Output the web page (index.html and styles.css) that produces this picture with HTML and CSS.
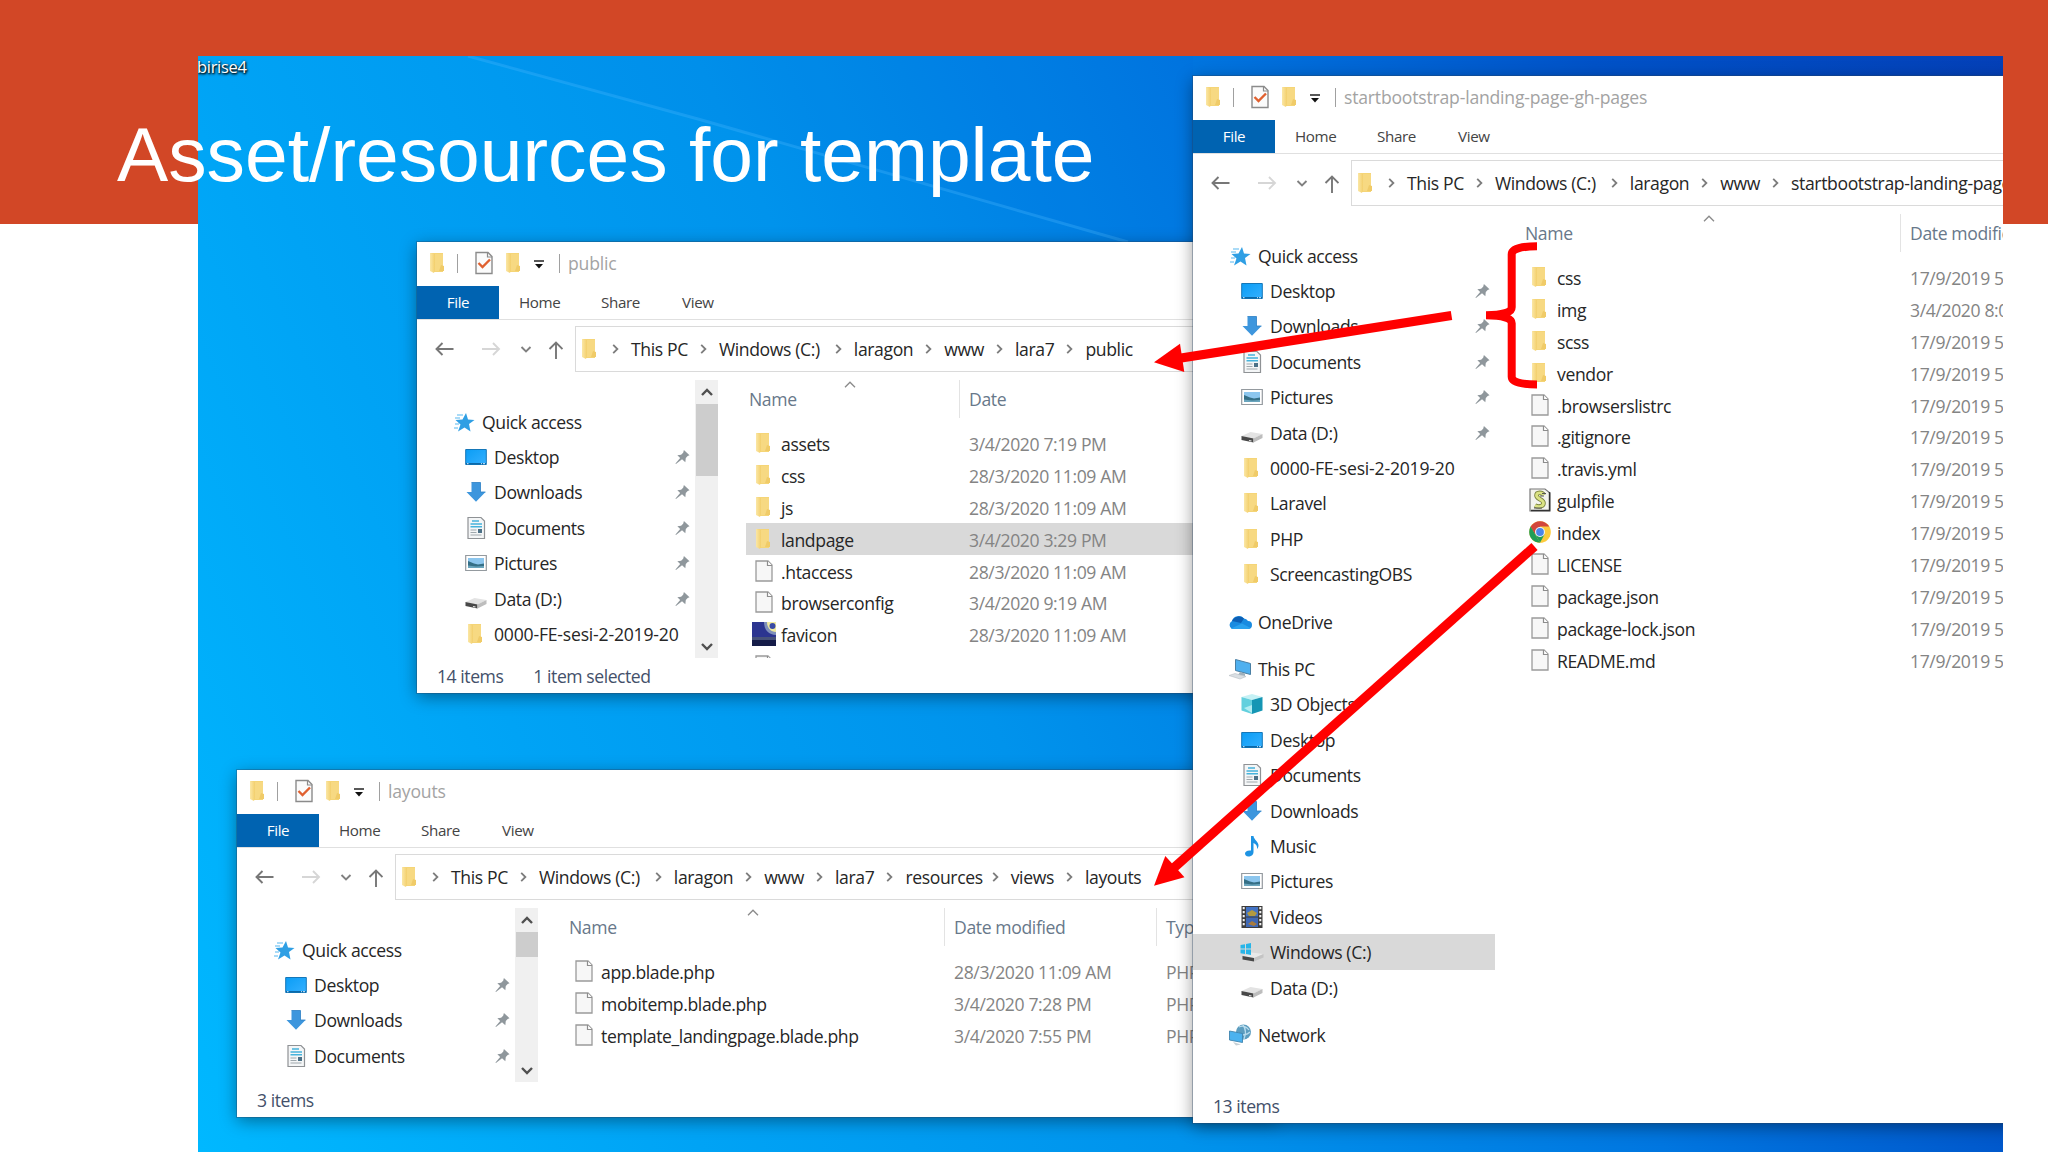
FILE: index.html
```html
<!DOCTYPE html>
<html lang="en">

<head>
  <meta charset="UTF-8">
  <meta name="viewport" content="width=device-width, initial-scale=1.0">
  <title>Asset/resources for template</title>
  <link rel="stylesheet" href="styles.css">
</head>

<body>
  <!-- icon sprite -->
  <svg class="sprite">
    <defs>
      <linearGradient id="gFolder"><stop offset="0" stop-color="#fbe7a6"/><stop offset="1" stop-color="#f3cf6c"/></linearGradient>
      <linearGradient id="gScreen" x1="0" y1="0" x2="1" y2="1"><stop offset="0" stop-color="#0a9df5"/><stop offset="1" stop-color="#35b0ff"/></linearGradient>
    </defs>
    <symbol id="folder" viewBox="0 0 24 24">
      <path d="M4 2h13v19H7z" fill="#f5d577"/>
      <path d="M4 2l5 1v16l-1 3-4-2z" fill="url(#gFolder)"/>
      <path d="M9 3h8v12l1 1v4H9z" fill="#f7d982"/>
      <path d="M15 14l3 1v5h-5z" fill="#f0cb68"/>
    </symbol>
    <symbol id="doc" viewBox="0 0 24 24">
      <path d="M4 2h12l4 4v16H4z" fill="#f7f7f7" stroke="#9a9a9a" stroke-width="1.3"/>
      <path d="M15.5 2v4.500H20" fill="#fff" stroke="#8d8d8d" stroke-width="1.2"/>
    </symbol>
    <symbol id="check" viewBox="0 0 24 24">
      <path d="M4 1.500h12l4 4v17H4z" fill="#fbfbfb" stroke="#8b8b8b" stroke-width="1.4"/>
      <path d="M15.500 1.500v4.500H20" fill="none" stroke="#8b8b8b" stroke-width="1.200"/>
      <path d="M6.500 12l4 4L18 8.500" fill="none" stroke="#e0602f" stroke-width="2.400"/>
    </symbol>
    <symbol id="star" viewBox="0 0 24 24">
      <path d="M14 3l2 6.500 6.500.5-5.500 4 1.500 7.500-6-4-6.500 4 2.500-7L3.500 10l7-.5z" fill="#2f9fe4"/>
      <path d="M5 5h6M3 8h5M3 14h4M2 18h4" stroke="#8fd0f5" stroke-width="1.300"/>
    </symbol>
    <symbol id="desktop" viewBox="0 0 24 24">
      <path d="M1.700 4.500h20.600v15H1.700z" fill="url(#gScreen)" stroke="#1577b8" stroke-width="1"/>
      <path d="M2 18.700h20" stroke="#0b68a8" stroke-width="1.400"/>
      <path d="M3 18.700h1.500M17 18.700h1M19 18.700h2" stroke="#d8f0ff" stroke-width="1"/>
    </symbol>
    <symbol id="down" viewBox="0 0 24 24">
      <path d="M7.500 2.500h9V12H21.500L12 21.800 2.500 12h5z" fill="#3d96dd"/>
      <path d="M7.500 2.500h9V12H21.500" fill="none" stroke="#2b7fc4" stroke-width=".8"/>
    </symbol>
    <symbol id="docs" viewBox="0 0 24 24">
      <path d="M4 1.500h13l3.500 3.500v17.500H4z" fill="#f4f6f7" stroke="#8f9295" stroke-width="1.200"/>
      <path d="M8 5h7M6.500 8h11.500M6.500 10.800h11.500" stroke="#46b3dc" stroke-width="1.500"/>
      <path d="M6.500 14h6M6.500 16.500h6M6.500 19h11" stroke="#9fa8ad" stroke-width="1.200"/>
      <path d="M14 13h4v4h-4z" fill="#4c7187"/>
    </symbol>
    <symbol id="pictures" viewBox="0 0 24 24">
      <path d="M1.700 4.500h20.600v15H1.700z" fill="#fff" stroke="#949a9f" stroke-width="1.200"/>
      <path d="M4 7h16v10H4z" fill="#8cc6ee"/>
      <path d="M4 10l6 2.500 4 1 6-1V17H4z" fill="#356f86"/>
      <path d="M4 14.500l8 1 8-.5v2H4z" fill="#6aa5bd"/>
    </symbol>
    <symbol id="drive" viewBox="0 0 24 24">
      <path d="M1.500 15l9-4 12 2-9.500 5z" fill="#e3e3e3"/>
      <path d="M1.500 15l12 2.500v4L1.500 19z" fill="#484848"/>
      <path d="M13.500 17.500l9-4.500v4l-9 4.500z" fill="#bdbdbd"/>
      <path d="M9 19.500l2.500.5" stroke="#e9e9e9" stroke-width="1.200"/>
    </symbol>
    <symbol id="cdrive" viewBox="0 0 24 24">
      <path d="M2.500 16l9-3.500 12 1.500-9.500 4.500z" fill="#e9e9e9"/>
      <path d="M2.500 16l11.500 2v3.500L2.500 19.500z" fill="#484848"/>
      <path d="M14 18l9.500-4v3.500L14 21.500z" fill="#c4c4c4"/>
      <path d="M.5 5l4.500-.8V8.500H.5zM6 4l5-.9v5.400H6zM.5 9.500H5V14l-4.500-.8zM6 9.500h5v5.400l-5-.9z" fill="#28b5e8"/>
    </symbol>
    <symbol id="cloud" viewBox="0 0 24 24">
      <path d="M4 19a4.500 4.500 0 0 1 0-8 7 7 0 0 1 12-2.500A6 6 0 0 1 20 11a4 4 0 0 1 0 8z" fill="#1a8be0"/>
      <path d="M4 11A7.500 7.500 0 0 1 16 8.500l-3 4.500z" fill="#0c5fb5"/>
      <path d="M3 18.500l11-5 8.500 4.500a4 4 0 0 1-2.500 1H4z" fill="#2ba2ee"/>
    </symbol>
    <symbol id="pc" viewBox="0 0 24 24">
      <path d="M7.500 2.500l15 4v11l-15-4z" fill="#4fb0ef" stroke="#4a7fa3" stroke-width="1"/>
      <path d="M12 15l5 1.500v2.500l-7-1z" fill="#9fb0bb"/>
      <path d="M1 18.500l6-2 11 3-6 2.500z" fill="#dadfe3" stroke="#b7bec4" stroke-width=".6"/>
    </symbol>
    <symbol id="cube" viewBox="0 0 24 24">
      <path d="M1.500 5L12 2l10.500 3L12 8z" fill="#c5f1f5"/>
      <path d="M1.500 5L12 8v14L1.500 18.500z" fill="#63d0de"/>
      <path d="M22.500 5L12 8v14l10.500-3.500z" fill="#1596b4"/>
      <path d="M4 16l8-3v8z" fill="#b2edf2"/>
    </symbol>
    <symbol id="music" viewBox="0 0 24 24">
      <path d="M11 2h2.500c.5 4 5 5.500 5 9.500 0 2-1 3-1.500 3.500.5-3-1-5-3.500-6v9c0 3-2.500 4.500-5 4.500S5 21 5 19.500 7 16 11 16.500z" fill="#1d93e3"/>
    </symbol>
    <symbol id="videos" viewBox="0 0 24 24">
      <path d="M1.500 1h21v22h-21z" fill="#3c3c3c"/>
      <path d="M6 2h12v9.500H6z" fill="#4373c4"/>
      <path d="M6 12.500h12V22H6z" fill="#3f68b5"/>
      <path d="M7 8l5-3 5 3-2 3H9z" fill="#b29a3f"/>
      <path d="M8 19l4-3 5 3-3 2z" fill="#a97b3c"/>
      <path d="M3.700 2v20M20.300 2v20" stroke="#f2f2f2" stroke-width="2" stroke-dasharray="2.200 1.800"/>
    </symbol>
    <symbol id="network" viewBox="0 0 24 24">
      <circle cx="15.500" cy="9" r="7.500" fill="#5c9dbf"/>
      <path d="M11 4c4-2 8 0 10 3M10 10c4 3 9 2 12-1M15 2c3 4 3 9 1 14" fill="none" stroke="#b9dced" stroke-width="1.300"/>
      <path d="M1.500 8l13 2.500v9L1.500 17z" fill="#4bb2ef" stroke="#3f84ae" stroke-width=".9"/>
      <path d="M5 19l8 2.500-5 1z" fill="#c7d0d5"/>
    </symbol>
    <symbol id="script" viewBox="0 0 24 24">
      <path d="M2 1h15l5 4v18H2z" fill="#f3f3ee" stroke="#777" stroke-width="1.200"/>
      <path d="M21.500 4v18.500H3" fill="none" stroke="#333" stroke-width="1.400"/>
      <path d="M15.500 7c-1-3-7-3-7 .5s7 4 7 7.500-5 4.500-8.500 2.500" fill="none" stroke="#7c8440" stroke-width="4.600"/>
      <path d="M15.500 7c-1-3-7-3-7 .5s7 4 7 7.500-5 4.500-8.500 2.500" fill="none" stroke="#dbe384" stroke-width="2.800"/>
      <path d="M14 5.500h4M12 8h4M6 20h8" stroke="#555" stroke-width="1.100"/>
    </symbol>
    <symbol id="chrome" viewBox="0 0 24 24">
      <circle cx="12" cy="12" r="10.800" fill="#fccb3c"/>
      <path d="M2.650 6.600L12 22.800A10.800 10.800 0 0 1 2.650 6.600z" fill="#1f9d57"/>
      <path d="M2.650 6.600L7.500 15l4.500 7.800 4.500-8.300z" fill="#1f9d57"/>
      <path d="M2.650 6.600A10.800 10.800 0 0 1 21.350 6.600H12l-4.500 7.900z" fill="#d2463c"/>
      <circle cx="12" cy="12" r="5" fill="#f3f3f3"/>
      <circle cx="12" cy="12" r="3.900" fill="#4a86ea"/>
    </symbol>
    <symbol id="night" viewBox="0 0 24 24">
      <path d="M0 0h24v24H0z" fill="#2c3590"/>
      <path d="M0 16h24v8H0z" fill="#151c48"/>
      <path d="M0 15h24v3H0z" fill="#47527a"/>
      <path d="M12 0h12v13c-7 0-12-5-12-13z" fill="#7f90bb"/>
      <path d="M15 0h9v10c-5 0-9-4-9-10z" fill="#f0eaa0"/>
      <circle cx="20.500" cy="4" r="3" fill="#3a4ba5"/>
    </symbol>
    <symbol id="pin" viewBox="0 0 16 16">
      <path d="M9.500.5l6 5.500-2 .8-2 2.200-.5 4.500-3.500-3L1 15.500l-.5-.5 5-6L2.500 6l4-.5 2.200-2z" fill="#8f979c"/>
    </symbol>
    <symbol id="chev" viewBox="0 0 7 10">
      <path d="M1.200.8L5.400 5 1.200 9.200" fill="none" stroke="#7c7c7c" stroke-width="1.800"/>
    </symbol>
    <symbol id="sort" viewBox="0 0 12 7">
      <path d="M1 6.300L6 1.200l5 5.100" fill="none" stroke="#8a8a8a" stroke-width="1.300"/>
    </symbol>
    <symbol id="scrollup" viewBox="0 0 12 8">
      <path d="M1 7l5-5 5 5" fill="none" stroke="#505050" stroke-width="2.400"/>
    </symbol>
    <symbol id="scrolldown" viewBox="0 0 12 8">
      <path d="M1 1l5 5 5-5" fill="none" stroke="#505050" stroke-width="2.400"/>
    </symbol>
    <symbol id="more" viewBox="0 0 10 9">
      <path d="M0 1h10" stroke="#222" stroke-width="1.500"/>
      <path d="M1 4h8L5 8.500z" fill="#111"/>
    </symbol>
    <!-- back, forward, recent and up -->
    <symbol id="arrows" viewBox="0 0 130 20">
      <path d="M20.500 10H3.500M9.500 4l-6 6 6 6" fill="none" stroke="#777" stroke-width="1.900"/>
      <path d="M49 10h17M60 4l6 6-6 6" fill="none" stroke="#d6d6d6" stroke-width="1.900"/>
      <path d="M88.500 8l4.500 4.500L97.500 8" fill="none" stroke="#808080" stroke-width="1.900"/>
      <path d="M123 20V4M116.500 10l6.500-6.500 6.500 6.500" fill="none" stroke="#777" stroke-width="1.900"/>
    </symbol>
  </svg>

  <div class="slide">
    <div class="band"></div>

    <div class="screen">
      <svg class="rays" viewBox="0 0 1805 1096">
        <path d="M270 0L500 63l430 123 65 20V0z" fill="#0060d8" opacity=".08"/>
        <path d="M270 0L500 63l430 123" fill="none" stroke="#4cb8ff" stroke-width="3" opacity=".3"/>
      </svg>
      <div class="shortcut">birise4</div>

      <!-- lara7/public -->
      <div class="window win-public">
        <div class="titlebar">
          <svg class="icon"><use href="#folder"/></svg>
          <i class="sep"></i>
          <svg class="icon check"><use href="#check"/></svg>
          <svg class="icon"><use href="#folder"/></svg>
          <svg class="more"><use href="#more"/></svg>
          <i class="sep"></i>
          <span class="caption">public</span>
        </div>
        <div class="tabs"><b>File</b><span class="home">Home</span><span class="share">Share</span><span>View</span></div>
        <div class="navbar">
          <svg class="arrows"><use href="#arrows"/></svg>
          <div class="address">
            <svg class="icon"><use href="#folder"/></svg>
            <svg class="chev"><use href="#chev"/></svg><span>This PC</span>
            <svg class="chev"><use href="#chev"/></svg><span class="disk">Windows (C:)</span>
            <svg class="chev"><use href="#chev"/></svg><span>laragon</span>
            <svg class="chev"><use href="#chev"/></svg><span>www</span>
            <svg class="chev"><use href="#chev"/></svg><span>lara7</span>
            <svg class="chev"><use href="#chev"/></svg><span>public</span>
          </div>
        </div>
        <div class="content">
          <ul class="tree">
            <li class="root"><svg class="icon"><use href="#star"/></svg>Quick access</li>
            <li><svg class="icon"><use href="#desktop"/></svg>Desktop<svg class="pin"><use href="#pin"/></svg></li>
            <li><svg class="icon"><use href="#down"/></svg>Downloads<svg class="pin"><use href="#pin"/></svg></li>
            <li><svg class="icon"><use href="#docs"/></svg>Documents<svg class="pin"><use href="#pin"/></svg></li>
            <li><svg class="icon"><use href="#pictures"/></svg>Pictures<svg class="pin"><use href="#pin"/></svg></li>
            <li><svg class="icon"><use href="#drive"/></svg>Data (D:)<svg class="pin"><use href="#pin"/></svg></li>
            <li class="digits"><svg class="icon"><use href="#folder"/></svg>0000-FE-sesi-2-2019-20</li>
          </ul>
          <div class="scrollbar">
            <svg><use href="#scrollup"/></svg>
            <div class="thumb"></div>
            <svg class="last"><use href="#scrolldown"/></svg>
          </div>
          <div class="files">
            <svg class="sort"><use href="#sort"/></svg>
            <div class="row head"><span class="name">Name</span><span class="date">Date</span></div>
            <div class="row"><svg class="icon"><use href="#folder"/></svg><span class="name">assets</span><span class="date">3/4/2020 7:19 PM</span></div>
            <div class="row"><svg class="icon"><use href="#folder"/></svg><span class="name">css</span><span class="date">28/3/2020 11:09 AM</span></div>
            <div class="row"><svg class="icon"><use href="#folder"/></svg><span class="name">js</span><span class="date">28/3/2020 11:09 AM</span></div>
            <div class="row selected"><svg class="icon"><use href="#folder"/></svg><span class="name">landpage</span><span class="date">3/4/2020 3:29 PM</span></div>
            <div class="row"><svg class="icon"><use href="#doc"/></svg><span class="name">.htaccess</span><span class="date">28/3/2020 11:09 AM</span></div>
            <div class="row"><svg class="icon"><use href="#doc"/></svg><span class="name">browserconfig</span><span class="date">3/4/2020 9:19 AM</span></div>
            <div class="row"><svg class="icon"><use href="#night"/></svg><span class="name">favicon</span><span class="date">28/3/2020 11:09 AM</span></div>
            <div class="row"><svg class="icon"><use href="#doc"/></svg></div>
          </div>
        </div>
        <div class="status"><span>14 items</span><span class="picked">1 item selected</span></div>
      </div>

      <!-- resources/views/layouts -->
      <div class="window win-layouts">
        <div class="titlebar">
          <svg class="icon"><use href="#folder"/></svg>
          <i class="sep"></i>
          <svg class="icon check"><use href="#check"/></svg>
          <svg class="icon"><use href="#folder"/></svg>
          <svg class="more"><use href="#more"/></svg>
          <i class="sep"></i>
          <span class="caption">layouts</span>
        </div>
        <div class="tabs"><b>File</b><span class="home">Home</span><span class="share">Share</span><span>View</span></div>
        <div class="navbar">
          <svg class="arrows"><use href="#arrows"/></svg>
          <div class="address">
            <svg class="icon"><use href="#folder"/></svg>
            <svg class="chev"><use href="#chev"/></svg><span>This PC</span>
            <svg class="chev"><use href="#chev"/></svg><span class="disk">Windows (C:)</span>
            <svg class="chev"><use href="#chev"/></svg><span>laragon</span>
            <svg class="chev"><use href="#chev"/></svg><span>www</span>
            <svg class="chev"><use href="#chev"/></svg><span>lara7</span>
            <svg class="chev"><use href="#chev"/></svg><span class="res">resources</span>
            <svg class="chev"><use href="#chev"/></svg><span>views</span>
            <svg class="chev"><use href="#chev"/></svg><span>layouts</span>
          </div>
        </div>
        <div class="content">
          <ul class="tree">
            <li class="root"><svg class="icon"><use href="#star"/></svg>Quick access</li>
            <li><svg class="icon"><use href="#desktop"/></svg>Desktop<svg class="pin"><use href="#pin"/></svg></li>
            <li><svg class="icon"><use href="#down"/></svg>Downloads<svg class="pin"><use href="#pin"/></svg></li>
            <li><svg class="icon"><use href="#docs"/></svg>Documents<svg class="pin"><use href="#pin"/></svg></li>
          </ul>
          <div class="scrollbar">
            <svg><use href="#scrollup"/></svg>
            <div class="thumb"></div>
            <svg class="last"><use href="#scrolldown"/></svg>
          </div>
          <div class="files">
            <svg class="sort"><use href="#sort"/></svg>
            <div class="row head"><span class="name">Name</span><span class="date">Date modified</span><span class="type">Type</span></div>
            <div class="row"><svg class="icon"><use href="#doc"/></svg><span class="name">app.blade.php</span><span class="date">28/3/2020 11:09 AM</span><span class="type">PHP</span></div>
            <div class="row"><svg class="icon"><use href="#doc"/></svg><span class="name">mobitemp.blade.php</span><span class="date">3/4/2020 7:28 PM</span><span class="type">PHP</span></div>
            <div class="row"><svg class="icon"><use href="#doc"/></svg><span class="name">template_landingpage.blade.php</span><span class="date">3/4/2020 7:55 PM</span><span class="type">PHP</span></div>
          </div>
        </div>
        <div class="status"><span>3 items</span></div>
      </div>

      <!-- startbootstrap source folder -->
      <div class="window win-source">
        <div class="titlebar">
          <svg class="icon"><use href="#folder"/></svg>
          <i class="sep"></i>
          <svg class="icon check"><use href="#check"/></svg>
          <svg class="icon"><use href="#folder"/></svg>
          <svg class="more"><use href="#more"/></svg>
          <i class="sep"></i>
          <span class="caption">startbootstrap-landing-page-gh-pages</span>
        </div>
        <div class="tabs"><b>File</b><span class="home">Home</span><span class="share">Share</span><span>View</span></div>
        <div class="navbar">
          <svg class="arrows"><use href="#arrows"/></svg>
          <div class="address">
            <svg class="icon"><use href="#folder"/></svg>
            <svg class="chev"><use href="#chev"/></svg><span>This PC</span>
            <svg class="chev"><use href="#chev"/></svg><span class="disk">Windows (C:)</span>
            <svg class="chev"><use href="#chev"/></svg><span>laragon</span>
            <svg class="chev"><use href="#chev"/></svg><span>www</span>
            <svg class="chev"><use href="#chev"/></svg><span>startbootstrap-landing-page</span>
          </div>
        </div>
        <div class="content">
          <ul class="tree">
            <li class="root"><svg class="icon"><use href="#star"/></svg>Quick access</li>
            <li><svg class="icon"><use href="#desktop"/></svg>Desktop<svg class="pin"><use href="#pin"/></svg></li>
            <li><svg class="icon"><use href="#down"/></svg>Downloads<svg class="pin"><use href="#pin"/></svg></li>
            <li><svg class="icon"><use href="#docs"/></svg>Documents<svg class="pin"><use href="#pin"/></svg></li>
            <li><svg class="icon"><use href="#pictures"/></svg>Pictures<svg class="pin"><use href="#pin"/></svg></li>
            <li><svg class="icon"><use href="#drive"/></svg>Data (D:)<svg class="pin"><use href="#pin"/></svg></li>
            <li class="digits"><svg class="icon"><use href="#folder"/></svg>0000-FE-sesi-2-2019-20</li>
            <li><svg class="icon"><use href="#folder"/></svg>Laravel</li>
            <li><svg class="icon"><use href="#folder"/></svg>PHP</li>
            <li><svg class="icon"><use href="#folder"/></svg>ScreencastingOBS</li>
            <li class="root"><svg class="icon"><use href="#cloud"/></svg>OneDrive</li>
            <li class="root"><svg class="icon"><use href="#pc"/></svg>This PC</li>
            <li><svg class="icon"><use href="#cube"/></svg>3D Objects</li>
            <li><svg class="icon"><use href="#desktop"/></svg>Desktop</li>
            <li><svg class="icon"><use href="#docs"/></svg>Documents</li>
            <li><svg class="icon"><use href="#down"/></svg>Downloads</li>
            <li><svg class="icon"><use href="#music"/></svg>Music</li>
            <li><svg class="icon"><use href="#pictures"/></svg>Pictures</li>
            <li><svg class="icon"><use href="#videos"/></svg>Videos</li>
            <li class="selected"><svg class="icon"><use href="#cdrive"/></svg>Windows (C:)</li>
            <li><svg class="icon"><use href="#drive"/></svg>Data (D:)</li>
            <li class="root"><svg class="icon"><use href="#network"/></svg>Network</li>
          </ul>
          <div class="files">
            <svg class="sort"><use href="#sort"/></svg>
            <div class="row head"><span class="name">Name</span><span class="date">Date modified</span></div>
            <div class="row"><svg class="icon"><use href="#folder"/></svg><span class="name">css</span><span class="date">17/9/2019 5</span></div>
            <div class="row"><svg class="icon"><use href="#folder"/></svg><span class="name">img</span><span class="date">3/4/2020 8:0</span></div>
            <div class="row"><svg class="icon"><use href="#folder"/></svg><span class="name">scss</span><span class="date">17/9/2019 5</span></div>
            <div class="row"><svg class="icon"><use href="#folder"/></svg><span class="name">vendor</span><span class="date">17/9/2019 5</span></div>
            <div class="row"><svg class="icon"><use href="#doc"/></svg><span class="name">.browserslistrc</span><span class="date">17/9/2019 5</span></div>
            <div class="row"><svg class="icon"><use href="#doc"/></svg><span class="name">.gitignore</span><span class="date">17/9/2019 5</span></div>
            <div class="row"><svg class="icon"><use href="#doc"/></svg><span class="name">.travis.yml</span><span class="date">17/9/2019 5</span></div>
            <div class="row"><svg class="icon"><use href="#script"/></svg><span class="name">gulpfile</span><span class="date">17/9/2019 5</span></div>
            <div class="row"><svg class="icon"><use href="#chrome"/></svg><span class="name">index</span><span class="date">17/9/2019 5</span></div>
            <div class="row"><svg class="icon"><use href="#doc"/></svg><span class="name">LICENSE</span><span class="date">17/9/2019 5</span></div>
            <div class="row"><svg class="icon"><use href="#doc"/></svg><span class="name">package.json</span><span class="date">17/9/2019 5</span></div>
            <div class="row"><svg class="icon"><use href="#doc"/></svg><span class="name">package-lock.json</span><span class="date">17/9/2019 5</span></div>
            <div class="row"><svg class="icon"><use href="#doc"/></svg><span class="name">README.md</span><span class="date">17/9/2019 5</span></div>
          </div>
        </div>
        <div class="status"><span>13 items</span></div>
      </div>
    </div>

    <h1>Asset/resources for template</h1>

    <!-- red arrows and bracket over the windows -->
    <svg class="marks" viewBox="0 0 2048 1152">
      <path d="M1451.500 315.500L1178 358.500" stroke="#f00" stroke-width="9.300"/>
      <path d="M1154 362.300l26-18.600 4.300 28.300z" fill="#f00"/>
      <path d="M1534.500 546.500L1172 869.500" stroke="#f00" stroke-width="9.300"/>
      <path d="M1154 885.700l11.300-29.700 19.200 21.300z" fill="#f00"/>
      <path d="M1537 246.300c-17 0-25.300 3-25.300 8v53c0 5-9 8-25.700 8 16.700 0 25.700 3 25.700 8v53.500c0 5 8.300 7.700 25.300 7.700" fill="none" stroke="#f00" stroke-width="8"/>
    </svg>
  </div>
</body>

</html>
```
FILE: styles.css
```css
* {
  margin: 0;
  padding: 0;
  box-sizing: border-box;
}

body {
  background-color: #fff;
  font-family: "Open Sans", "Noto Sans", sans-serif;
}

.sprite {
  position: absolute;
  width: 0;
  height: 0;
}

.slide {
  position: relative;
  width: 2048px;
  height: 1152px;
  overflow: hidden;
}

.band {
  height: 224px;
  background-color: #d24726;
}

h1 {
  position: absolute;
  left: 117px;
  top: 110px;
  font: 76.8px/88px "Liberation Sans", Arial, sans-serif;
  color: #fff;
  white-space: nowrap;
}

.marks {
  position: absolute;
  left: 0;
  top: 0;
  width: 2048px;
  height: 1152px;
}

/* desktop */
.screen {
  position: absolute;
  left: 198px;
  top: 56px;
  width: 1805px;
  height: 1096px;
  overflow: hidden;
  background: linear-gradient(66deg, #00b8ff 0%, #00a3f5 22%, #0093ec 43%, #0076e0 64%, #0052c8 82%, #0440b8 100%);
}

.rays {
  display: block;
  width: 1805px;
  height: 1096px;
}

.shortcut {
  position: absolute;
  left: -1px;
  top: 0;
  font-size: 16.5px;
  line-height: 22px;
  letter-spacing: -0.3px;
  color: #fff;
  text-shadow: 1px 1px 2px #000, 0 1px 3px #000;
}

/* explorer window */
.window {
  position: absolute;
  display: flex;
  flex-direction: column;
  background-color: #fff;
  box-shadow: 0 0 0 1px rgba(40, 70, 100, 0.35), 0 4px 16px rgba(0, 0, 0, 0.4);
  font-size: 17.6px;
  letter-spacing: -0.38px;
  white-space: nowrap;
  color: #262626;
}

.win-public {
  left: 219px;
  top: 186px;
  width: 860px;
  height: 451px;
}

.win-layouts {
  left: 39px;
  top: 714px;
  width: 1040px;
  height: 347px;
}

.win-source {
  left: 995px;
  top: 20px;
  width: 900px;
  height: 1047px;
}

.icon {
  flex: none;
  width: 24px;
  height: 24px;
}

.titlebar {
  display: flex;
  align-items: center;
  height: 44px;
  padding: 0 0 2px 9px;
}

.sep {
  width: 1px;
  height: 19px;
  margin: 0 9px 0 7px;
  background-color: #a0a0a0;
}

.check {
  margin: 0 6px 0 5px;
}

.more {
  width: 10px;
  height: 9px;
  margin: 2px 8px 0 8px;
}

.caption {
  margin-left: -1px;
  letter-spacing: -0.2px;
  color: #a3a3a3;
}

.tabs {
  display: flex;
  height: 34px;
  border-bottom: 1px solid #e0e0e0;
  font-size: 15.2px;
  line-height: 33px;
  color: #444;
}

.tabs b {
  width: 82px;
  margin-right: 20px;
  font-weight: normal;
  text-align: center;
  color: #fff;
  background-color: #0063b1;
}

.tabs .home {
  width: 82px;
}

.tabs .share {
  width: 81px;
}

.navbar {
  display: flex;
  height: 60px;
  padding: 6px 0 8px 16px;
}

.arrows {
  flex: none;
  width: 130px;
  height: 20px;
  margin: 13px 12px 0 0;
}

.address {
  display: flex;
  align-items: center;
  flex: 1;
  padding-left: 2px;
  border: 1px solid #dadada;
  border-right: 0;
  overflow: hidden;
}

.chev {
  flex: none;
  width: 7px;
  height: 10px;
  margin: 0 12px 1px;
}

.address .icon + .chev {
  margin-left: 10px;
}

.disk {
  margin-right: 3px;
}

.res {
  margin-right: -3px;
}

.content {
  display: flex;
  flex: 1;
  min-height: 0;
  overflow: hidden;
}

.tree {
  flex: none;
  width: 278px;
  padding-top: 24px;
  list-style: none;
}

.tree li {
  display: flex;
  align-items: center;
  height: 35.4px;
  padding: 0 5px 0 47px;
}

.tree li .icon {
  margin-right: 6px;
}

.tree .root {
  padding-left: 35px;
}

.tree li + .root {
  margin-top: 12px;
}

.tree .digits {
  letter-spacing: -0.2px;
}

.pin {
  width: 15px;
  height: 16px;
  margin-left: auto;
}

.selected {
  background-color: #d9d9d9;
}

.scrollbar {
  display: flex;
  flex-direction: column;
  align-items: center;
  width: 23px;
  padding: 8px 0 7px;
  background-color: #f0f0f0;
}

.scrollbar svg {
  width: 12px;
  height: 8px;
}

.scrollbar .last {
  margin-top: auto;
}

.thumb {
  width: 22px;
  height: 72px;
  margin-top: 8px;
  background-color: #cdcdcd;
}

.win-layouts .thumb {
  height: 25px;
}

.files {
  position: relative;
  flex: 1;
  margin-left: 28px;
}

.sort {
  position: absolute;
  left: 98px;
  top: 1px;
  width: 12px;
  height: 7px;
}

.row {
  display: flex;
  align-items: center;
  height: 31.9px;
  padding-left: 6px;
}

.row .icon {
  margin-right: 5px;
}

.row span {
  padding-top: 2px;
}

.name {
  width: 188px;
}

.date,
.type {
  color: #848484;
}

.head {
  align-items: stretch;
  height: 38px;
  margin-bottom: 9px;
  padding-left: 3px;
  line-height: 38px;
}

.head span {
  padding-top: 0;
  color: #68788a;
}

.head .name {
  width: 210px;
}

.head .date,
.head .type {
  padding-left: 9px;
  border-left: 1px solid #e3e3e3;
}

/* wider columns */
.win-layouts .name {
  width: 353px;
}

.win-layouts .head .name {
  width: 375px;
}

.win-layouts .date {
  width: 212px;
}

.win-layouts .sort {
  left: 181px;
}

.win-source .tree {
  width: 302px;
}

.win-source .files {
  margin-left: 27px;
}

.win-source .row .date {
  margin-left: -1px;
}

.win-source .name {
  width: 354px;
}

.win-source .head .name {
  width: 376px;
}

.win-source .sort {
  left: 181px;
}

.status {
  display: flex;
  height: 35px;
  padding-left: 20px;
  line-height: 36px;
  letter-spacing: -0.45px;
  color: #43506a;
}

.picked {
  margin-left: 30px;
}
```
